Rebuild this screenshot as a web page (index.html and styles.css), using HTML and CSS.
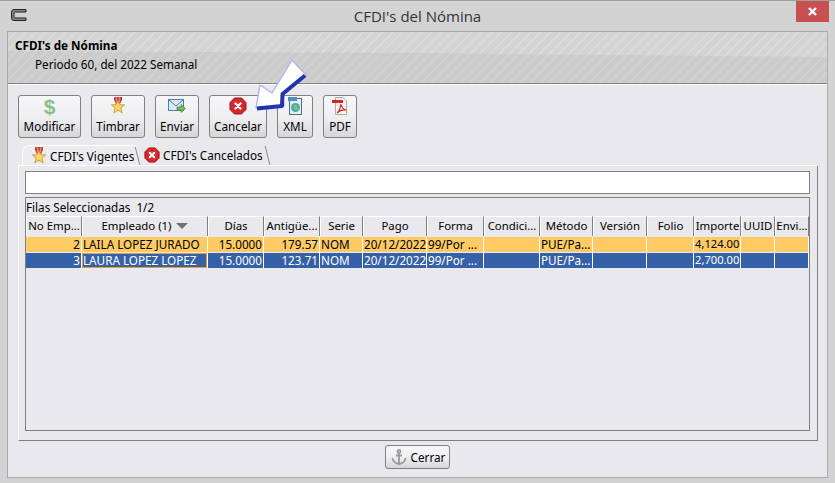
FILE: index.html
```html
<!DOCTYPE html>
<html lang="es">
<head>
<meta charset="UTF-8">
<title>CFDI's del Nómina</title>
<link rel="stylesheet" href="styles.css">
</head>
<body>
<svg class="defs" width="0" height="0">
	<symbol id="ico-star" viewBox="0 0 18 18">
		<path d="M5 0h8v3l-2 4H7L5 3z" fill="#c8433c"/>
		<path d="M7 0h1v5H7zM10 0h1v5h-1z" fill="#e88a7a"/>
		<path d="M9 3.200l1.800 4.400 4.900.3-3.800 3 1.300 5-4.200-2.700-4.200 2.700 1.300-5-3.800-3 4.900-.3z" fill="#fbd468" stroke="#c88f35" stroke-width=".8"/>
	</symbol>
	<symbol id="ico-cancel" viewBox="0 0 18 18">
		<path d="M5.500 1h7L17 5.500v7L12.500 17h-7L1 12.500v-7z" fill="#d8262c" stroke="#96141a" stroke-width="1"/>
		<path d="M6.500 6.500l5 5M11.500 6.500l-5 5" stroke="#fff" stroke-width="2.400" stroke-linecap="round"/>
	</symbol>
</svg>
<div class="window">
	<div class="titlebar">
		<div class="titlebar-left">
			<svg class="win-icon" width="17" height="14" viewBox="0 0 17 14"><path d="M16 1.500H4Q1.500 1.500 1.500 4v6q0 2.500 2.500 2.500h12V10H5Q4 10 4 9V5q0-1 1-1h11z" fill="#8a8a8a" stroke="#222" stroke-width="1"/></svg>
		</div>
		<div class="title">CFDI's del Nómina</div>
		<div class="titlebar-right">
			<div class="close"><svg width="11" height="9" viewBox="0 0 11 9"><path d="M2 1l7 7M9 1L2 8" stroke="#fff" stroke-width="2.400"/></svg></div>
		</div>
	</div>
	<div class="frame">
		<div class="head">
			<div class="head-title">CFDI's de Nómina</div>
			<div class="head-sub">Periodo 60, del 2022 Semanal</div>
		</div>
		<div class="toolbar">
			<button class="btn btn-modificar"><span class="dollar">$</span><span>Modificar</span></button>
			<button class="btn btn-timbrar"><svg class="ico" width="18" height="18"><use href="#ico-star"/></svg><span>Timbrar</span></button>
			<button class="btn btn-enviar">
				<svg class="ico" width="18" height="18" viewBox="0 0 18 18"><rect x=".5" y="2.500" width="15" height="11" fill="#dbe8f6" stroke="#4a7fb5"/><path d="M1 3l7 6 7-6" fill="none" stroke="#4a7fb5"/><path d="M9 10h4V7.500l4.500 4-4.500 4V13H9z" fill="#7cb85a" stroke="#47803a" stroke-width=".7"/></svg>
				<span>Enviar</span>
			</button>
			<button class="btn btn-cancelar"><svg class="ico" width="18" height="18"><use href="#ico-cancel"/></svg><span>Cancelar</span></button>
			<button class="btn btn-xml">
				<svg class="ico" width="18" height="18" viewBox="0 0 18 18"><rect x="3.500" y="1.500" width="12" height="16" fill="#e6eef5" stroke="#5a6b7a"/><rect x="2" y="0" width="9" height="4" fill="#4d8fc4"/><circle cx="9.500" cy="10.500" r="4.500" fill="#38a8d8"/><path d="M7 9q2-3 4 0t1 4q-3 1-4-1z" fill="#8cc63f"/></svg>
				<span>XML</span>
			</button>
			<button class="btn btn-pdf">
				<svg class="ico" width="18" height="18" viewBox="0 0 18 18"><path d="M4.500 .5H12l3.500 3.500v13.500h-11z" fill="#f6f6f6" stroke="#9a9a9a" stroke-width=".8"/><path d="M1 3h11v3H1z" fill="#d9231f"/><path d="M6 16q3-2 4-9 1 5 5 6-5-1-9 3z" fill="none" stroke="#d9231f" stroke-width="1.200"/></svg>
				<span>PDF</span>
			</button>
		</div>
		<div class="tabs">
			<div class="tab tab-on"><svg width="18" height="18"><use href="#ico-star"/></svg><span>CFDI's Vigentes</span></div>
			<div class="tab tab-off"><svg width="16" height="16"><use href="#ico-cancel"/></svg><span>CFDI's Cancelados</span></div>
		</div>
		<div class="pane">
			<input class="filter" type="text">
			<div class="grid-box">
				<div class="count">Filas Seleccionadas&nbsp; 1/2</div>
				<div class="row row-head">
					<div class="hc">No Emp...</div>
					<div class="hc">Empleado (1) <i class="sort"></i></div>
					<div class="hc">Días</div>
					<div class="hc">Antigüe...</div>
					<div class="hc">Serie</div>
					<div class="hc">Pago</div>
					<div class="hc">Forma</div>
					<div class="hc">Condici...</div>
					<div class="hc">Método</div>
					<div class="hc">Versión</div>
					<div class="hc">Folio</div>
					<div class="hc">Importe</div>
					<div class="hc">UUID</div>
					<div class="hc">Envi...</div>
				</div>
				<div class="row row-orange">
					<div class="c r">2</div>
					<div class="c">LAILA LOPEZ JURADO</div>
					<div class="c r">15.0000</div>
					<div class="c r">179.57</div>
					<div class="c">NOM</div>
					<div class="c">20/12/2022</div>
					<div class="c">99/Por ...</div>
					<div class="c"></div>
					<div class="c">PUE/Pa...</div>
					<div class="c"></div>
					<div class="c"></div>
					<div class="c r imp">4,124.00</div>
					<div class="c"></div>
					<div class="c"></div>
				</div>
				<div class="row row-blue">
					<div class="c r">3</div>
					<div class="c focus">LAURA LOPEZ LOPEZ</div>
					<div class="c r">15.0000</div>
					<div class="c r">123.71</div>
					<div class="c">NOM</div>
					<div class="c">20/12/2022</div>
					<div class="c">99/Por ...</div>
					<div class="c"></div>
					<div class="c">PUE/Pa...</div>
					<div class="c"></div>
					<div class="c"></div>
					<div class="c r imp">2,700.00</div>
					<div class="c"></div>
					<div class="c"></div>
				</div>
			</div>
		</div>
		<div class="foot">
			<button class="btn-close">
				<svg width="18" height="18" viewBox="0 0 18 18"><g fill="none" stroke="#9b9b9b" stroke-width="1.800"><circle cx="9" cy="3.500" r="1.500"/><path d="M9 5v11M6 7.500h6M2.500 10q.5 5 6.500 6 6-1 6.500-6"/></g></svg>
				<span>Cerrar</span>
			</button>
		</div>
	</div>
	<svg class="arrow" width="60" height="56" viewBox="0 0 60 56">
		<path d="M4 51L8 28l12 8L40 3l14 15-22 18-1 7 1 6z" fill="#fff" stroke="#b0b5e6" stroke-width="1.400" stroke-linejoin="round"/>
		<path d="M5 51.500l25-2.500 .5-12L53 18.500" fill="none" stroke="#1f35b0" stroke-width="4" stroke-linejoin="round"/>
	</svg>
</div>
</body>
</html>
```
FILE: styles.css
```css
html,body { margin:0; padding:0; }
body { font-family:"Noto Sans","Liberation Sans",sans-serif; font-size:11.7px; color:#000; }
.defs { position:absolute; }

.window { position:relative; width:835px; height:483px; box-sizing:border-box; display:flex; flex-direction:column; background:#d3d3d3; border-top:1px solid #a0a0a0; overflow:hidden; }

/* barra de titulo */
.titlebar { height:30px; flex:none; display:grid; grid-template-columns:1fr auto 1fr; }
.titlebar-left { padding:7px 0 0 10px; }
.win-icon { display:block; }
.title { font-family:"Open Sans","Noto Sans",sans-serif; font-size:15px; line-height:30px; color:#333; }
.titlebar-right { display:flex; justify-content:flex-end; padding-right:6px; }
.close { width:33px; height:21px; background:#c75050; display:flex; align-items:center; justify-content:center; }

.frame { flex:1; margin:0 7px 5px; border:1px solid #ababab; background:#e9e8ec; display:flex; flex-direction:column; min-height:0; }

/* encabezado */
.head { position:relative; height:51px; flex:none; box-sizing:content-box; border-bottom:1px solid #808080; box-shadow:0 1px 0 #fff; background:repeating-linear-gradient(135deg,#cbcbcb 0,#cbcbcb 5px,#d1d1d1 5px,#d1d1d1 7px); }
.head::before { content:""; position:absolute; left:0; right:0; top:0; bottom:0; background:repeating-linear-gradient(135deg,#d3d3d3 0,#d3d3d3 5px,#dadada 5px,#dadada 7px); clip-path:polygon(0 0,100% 0,100% 25px,50% 21px,0 19px); }
.head-title { position:relative; font-weight:bold; padding:5px 0 0 7px; line-height:16px; }
.head-sub { position:relative; padding:3px 0 0 27px; line-height:16px; }

/* botones */
.toolbar { display:flex; padding:11px 0 0 10px; flex:none; }
.btn { height:43px; box-sizing:border-box; margin:0 10px 0 0; padding:0; font:inherit; color:#000; border:1px solid #808080; border-radius:3px; background:linear-gradient(#f7f7fa,#eeeef0 55%,#d6d6d8); display:flex; flex-direction:column; align-items:center; }
.btn span { line-height:15px; }
.ico { display:block; height:18px; margin:1px 0 4px; }
.dollar { font-family:"Liberation Sans",sans-serif; font-weight:bold; font-size:21px; color:#86c088; height:18px; margin:2px 0 3px; line-height:18px !important; }
.btn-modificar { width:63px; }
.btn-timbrar { width:54px; }
.btn-enviar { width:44px; }
.btn-cancelar { width:58px; }
.btn-xml { width:36px; }
.btn-pdf { width:34px; }

/* pestañas */
.tabs { display:flex; height:20px; padding:7px 0 0 14px; flex:none; }
.tab { position:relative; display:flex; align-items:center; gap:3px; height:20px; box-sizing:border-box; white-space:nowrap; }
.tab::after { content:""; position:absolute; right:1px; top:1px; bottom:0; width:1px; background:#8a8a8a; transform:skewX(14deg); }
.tab-on { padding-left:7px; width:117px; gap:2px; background:#ecebef; border-top:1px solid #fff; border-left:1px solid #fff; border-radius:7px 6px 0 0; }
.tab-off { padding-left:5px; width:130px; }

.pane { flex:none; margin:0 9px 0 10px; height:276px; box-sizing:border-box; border:1px solid #808080; border-left-color:#fff; border-top-color:#fff; padding:5px 7px 0 6px; display:flex; flex-direction:column; gap:3px; }
.filter { display:block; height:23px; box-sizing:border-box; margin:0; padding:0; background:#fff; border:1px solid #808080; }

/* tabla */
.grid-box { height:234px; box-sizing:border-box; border:1px solid #808080; }
.count { line-height:18px; height:18px; }
.row { display:grid; grid-template-columns:56px 126px 56px 56px 43px 64px 57px 56px 53px 54px 47px 47px 34px 34px; }
.row-head { height:20px; }
.hc { text-align:center; font-size:11.4px; line-height:18px; white-space:nowrap; overflow:hidden; border-top:1px solid #fff; border-left:1px solid #fff; border-right:1px solid #808080; box-sizing:border-box; }
.sort { display:inline-block; border:6px solid transparent; border-top:6px solid #707070; border-bottom:0; margin-left:2px; vertical-align:1px; }
.row-orange, .row-blue { height:15px; margin-top:1px; }
.c { line-height:14px; padding:0 1px; white-space:nowrap; overflow:hidden; border-right:1px solid #fff; box-sizing:border-box; }
.r { text-align:right; }
.imp { font-size:11.2px; }
.row-orange .c { background:#fdca64; }
.row-blue .c { background:#3561a8; color:#fff; }
.row-blue .focus { box-shadow:inset 0 0 0 1px #f09a2a; }

/* pie */
.foot { display:flex; justify-content:center; padding-top:4px; }
.btn-close { width:65px; height:24px; box-sizing:border-box; padding:0; font:inherit; color:#000; border:1px solid #808080; border-radius:3px; background:linear-gradient(#f7f7fa,#eeeef0 55%,#d6d6d8); display:flex; align-items:center; justify-content:center; gap:3px; }

.arrow { position:absolute; left:252px; top:56px; }
```
